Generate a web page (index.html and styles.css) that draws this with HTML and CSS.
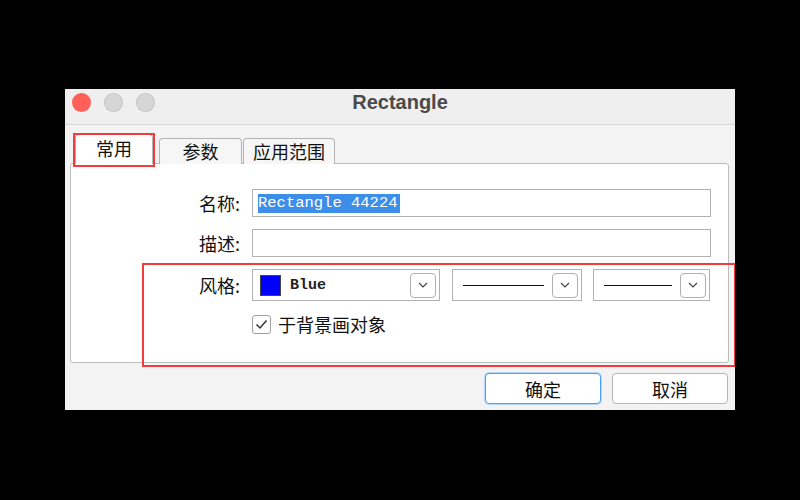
FILE: index.html
```html
<!DOCTYPE html>
<html lang="zh-CN">
<head>
    <meta charset="UTF-8">
    <title>Rectangle</title>
    <link rel="stylesheet" href="styles.css">
</head>
<body>
    <div class="window">
        <div class="titlebar">
            <div class="lights">
                <span class="light close"></span>
                <span class="light"></span>
                <span class="light"></span>
            </div>
            <div class="title">Rectangle</div>
        </div>

        <div class="tabs">
            <div class="tab active">常用</div>
            <div class="tab tab-params">参数</div>
            <div class="tab tab-scope">应用范围</div>
        </div>

        <div class="panel">
            <div class="form">
                <label>名称:</label>
                <div class="input"><span class="selected">Rectangle 44224</span></div>

                <label>描述:</label>
                <div class="input"></div>

                <label>风格:</label>
                <div class="combos">
                    <div class="combo combo-color">
                        <span class="swatch"></span>
                        <span class="combo-text">Blue</span>
                        <span class="chevron"><svg width="10" height="6" viewBox="0 0 10 6"><path d="M1 1l4 4 4-4" fill="none" stroke="#444" stroke-width="1.2"/></svg></span>
                    </div>
                    <div class="combo combo-line">
                        <span class="line"></span>
                        <span class="chevron"><svg width="10" height="6" viewBox="0 0 10 6"><path d="M1 1l4 4 4-4" fill="none" stroke="#444" stroke-width="1.2"/></svg></span>
                    </div>
                    <div class="combo combo-width">
                        <span class="line"></span>
                        <span class="chevron"><svg width="10" height="6" viewBox="0 0 10 6"><path d="M1 1l4 4 4-4" fill="none" stroke="#444" stroke-width="1.2"/></svg></span>
                    </div>
                </div>

                <span></span>
                <div class="check-row">
                    <span class="checkbox"><svg width="13" height="11" viewBox="0 0 13 11"><path d="M1.5 5.5l3.5 3.5 6.5-7.5" fill="none" stroke="#333" stroke-width="1.5"/></svg></span>
                    <span>于背景画对象</span>
                </div>
            </div>
        </div>

        <div class="buttons">
            <button class="btn default">确定</button>
            <button class="btn">取消</button>
        </div>

        <!-- red callouts drawn over the dialog -->
        <div class="mark mark-tab"></div>
        <div class="mark mark-style"></div>
    </div>
</body>
</html>
```

FILE: styles.css
```css
body {
    margin: 0;
    background: #000;
    padding: 89px 0 0 65px;
    height: 500px;
    box-sizing: border-box;
    overflow: hidden;
    font-family: "Noto Sans CJK SC", "Liberation Sans", sans-serif;
}

.window {
    position: relative;
    width: 670px;
    height: 321px;
    background: #f3f3f3;
    overflow: hidden;
}

.titlebar {
    position: relative;
    height: 35px;
    background: #efefef;
    border-bottom: 1px solid #d8d8d8;
    box-sizing: border-box;
    height: 36px;
}

.lights {
    display: flex;
    gap: 13px;
    padding: 4px 0 0 7px;
}

.light {
    width: 19px;
    height: 19px;
    border-radius: 50%;
    background: #d6d6d6;
    box-shadow: inset 0 0 0 1px #c9c9c9;
}

.light.close {
    background: #fe5f57;
    box-shadow: none;
}

.title {
    position: absolute;
    left: 0;
    right: 0;
    top: 1px;
    text-align: center;
    font-family: "Liberation Sans", Arial, sans-serif;
    font-weight: bold;
    font-size: 20px;
    line-height: 24px;
    color: #4a4a4a;
}

.tabs {
    display: flex;
    align-items: flex-end;
    height: 39px;
    padding-left: 10px;
    margin-bottom: -1px;
    position: relative;
    z-index: 1;
}

.tab {
    height: 25px;
    border: 1px solid #b4b4b4;
    border-bottom: none;
    border-radius: 4px 4px 0 0;
    background: #f6f6f6;
    font-size: 18px;
    line-height: 24px;
    text-align: center;
    color: #111;
    box-sizing: content-box;
}

.tab.active {
    width: 76px;
    height: 29px;
    line-height: 26px;
    background: #fff;
}

.tab-params {
    width: 81px;
    margin-left: 6px;
}

.tab-scope {
    width: 90px;
    margin-left: 1px;
}

.panel {
    margin-left: 5px;
    width: 657px;
    height: 198px;
    background: #fff;
    border: 1px solid #bdbdbd;
    border-radius: 3px;
}

.form {
    display: grid;
    grid-template-columns: 169px minmax(0, 1fr);
    column-gap: 12px;
    row-gap: 12px;
    padding: 25px 17px 0 0;
    align-items: center;
}

.form label {
    text-align: right;
    font-size: 18px;
    color: #111;
}

.input {
    height: 26px;
    border: 1px solid #b2b2b2;
    background: #fff;
    display: flex;
    align-items: center;
    padding-left: 5px;
}

.selected {
    background: #3d8ee9;
    color: #fff;
    font-family: "Liberation Mono", "Courier New", monospace;
    font-size: 15.5px;
    line-height: 19px;
    padding-right: 2px;
}

.combos {
    display: flex;
}

.combo {
    height: 32px;
    border: 1px solid #b2b2b2;
    background: #fff;
    display: flex;
    align-items: center;
    box-sizing: border-box;
    flex: none;
}

.combo-color {
    width: 188px;
    padding-left: 7px;
}

.combo-line {
    width: 130px;
    margin-left: 12px;
    padding-left: 10px;
}

.combo-width {
    width: 117px;
    margin-left: 11px;
    padding-left: 10px;
}

.swatch {
    width: 19px;
    height: 19px;
    background: #0000ff;
    border: 1px solid #444;
}

.combo-text {
    margin-left: 9px;
    font-family: "Liberation Mono", "Courier New", monospace;
    font-weight: bold;
    font-size: 15px;
    color: #222;
    flex: 1;
}

.line {
    flex: 1;
    height: 0;
    border-top: 1.5px solid #111;
    margin-right: 8px;
}

.chevron {
    width: 24px;
    height: 23px;
    margin-left: auto;
    margin-right: 3px;
    border: 1px solid #b0b0b0;
    border-radius: 4px;
    background: #fff;
    display: flex;
    align-items: center;
    justify-content: center;
}

.check-row {
    display: flex;
    align-items: center;
    gap: 7px;
    font-size: 18px;
    color: #111;
    margin-top: -2px;
}

.checkbox {
    width: 17px;
    height: 17px;
    border: 1px solid #a0a0a0;
    border-radius: 3px;
    background: #fff;
    display: flex;
    align-items: center;
    justify-content: center;
}

.buttons {
    display: flex;
    justify-content: flex-end;
    gap: 11px;
    padding: 10px 7px 0 0;
}

.btn {
    width: 116px;
    height: 31px;
    border: 1px solid #b5b5b5;
    border-radius: 4px;
    background: #fff;
    font-family: "Noto Sans CJK SC", sans-serif;
    font-size: 18px;
    color: #111;
    padding: 0;
}

.btn.default {
    border-color: #4d9ff0;
    box-shadow: 0 0 0 1px #b9d8f8;
}

.mark {
    position: absolute;
    border: 2px solid #f23b3b;
    box-sizing: border-box;
    z-index: 2;
}

.mark-tab {
    left: 8px;
    top: 44px;
    width: 82px;
    height: 34px;
}

.mark-style {
    left: 77px;
    top: 174px;
    width: 594px;
    height: 104px;
}
```
